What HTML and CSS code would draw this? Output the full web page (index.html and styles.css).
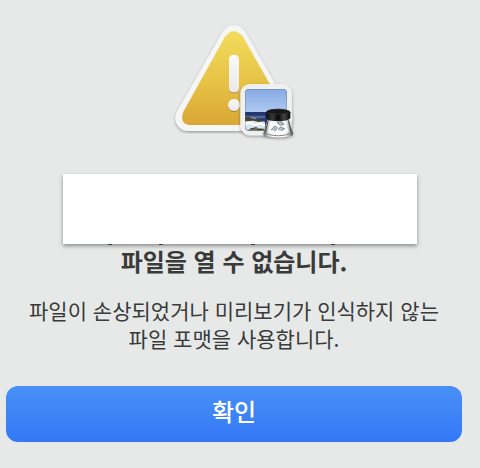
FILE: index.html
```html
<!DOCTYPE html>
<html lang="ko">
<head>
<meta charset="utf-8">
<title>미리보기</title>
<link rel="stylesheet" href="styles.css">
</head>
<body>
<main class="dialog">
  <svg class="icon" viewBox="-3 0 420 405" aria-hidden="true">
    <defs>
      <linearGradient id="gold" x1="0" y1="0" x2="0" y2="1"><stop offset="0" stop-color="#f3dc5c"/><stop offset=".5" stop-color="#e7c548"/><stop offset="1" stop-color="#daa735"/></linearGradient>
      <linearGradient id="edge" x1="0" y1="0" x2="0" y2="1"><stop offset="0" stop-color="#fafafa"/><stop offset="1" stop-color="#e9e9e9"/></linearGradient>
      <linearGradient id="sky" x1="0" y1="0" x2="0" y2="1"><stop offset="0" stop-color="#86aae4"/><stop offset="1" stop-color="#b0cbf1"/></linearGradient>
      <linearGradient id="lid" x1="0" y1="0" x2="1" y2="0"><stop offset="0" stop-color="#111"/><stop offset=".28" stop-color="#383838"/><stop offset=".5" stop-color="#080808"/><stop offset=".75" stop-color="#444"/><stop offset="1" stop-color="#050505"/></linearGradient>
      <linearGradient id="glass" x1="0" y1="0" x2="1" y2="0"><stop offset="0" stop-color="#555"/><stop offset=".16" stop-color="#d8d8d8"/><stop offset=".3" stop-color="#fff"/><stop offset=".75" stop-color="#f4f7f9"/><stop offset=".88" stop-color="#aaa"/><stop offset="1" stop-color="#444"/></linearGradient>
      <filter id="shadow" x="-20%" y="-20%" width="140%" height="140%"><feDropShadow dx="0" dy="4" stdDeviation="4" flood-color="#000" flood-opacity=".35"/></filter>
      <filter id="relief" x="-50%" y="-20%" width="200%" height="150%"><feDropShadow dx="0" dy="3" stdDeviation="2" flood-color="#7b5a10" flood-opacity=".6"/></filter>
      <clipPath id="photo"><rect x="240" y="222" width="126" height="125" rx="12"/></clipPath>
    </defs>
    <path d="M207 70 L344 309 L70 309 Z" fill="#f6f6f6" stroke="#f6f6f6" stroke-width="78" stroke-linejoin="round" filter="url(#shadow)"/>
    <path d="M181 64 Q207 33 233 64 L360 287 Q374 328 341 330 H73 Q43 325 55 290 Z" fill="url(#gold)"/>
    <g filter="url(#relief)">
      <path d="M192 134 Q192 119 207 119 Q222 119 222 134 V218 Q222 232 207 232 Q192 232 192 218 Z" fill="url(#edge)"/>
      <circle cx="207" cy="270" r="18" fill="url(#edge)"/>
    </g>
    <rect x="226" y="207" width="155" height="154" rx="29" fill="#f0f0ef" filter="url(#shadow)"/>
    <g clip-path="url(#photo)">
      <rect x="240" y="222" width="126" height="72" fill="url(#sky)"/>
      <path d="M240 291H366V347H240Z" fill="#25366f"/>
      <path d="M240 302H300V310H240Z" fill="#506997"/>
      <path d="M240 309 L254 306 L276 312 L300 320 V347 H240Z" fill="#d8e7ed"/>
      <path d="M240 307 L252 305 L269 312 L280 311 L300 319 L281 321 L265 317 L240 319Z" fill="#45413f"/>
      <path d="M240 326 L255 323 L269 330 L287 326 L301 332" fill="none" stroke="#fff" stroke-width="6"/>
      <path d="M246 347 L257 340 L266 342 L272 334 L280 340 L298 341 L301 347Z" fill="#786e54"/>
      <path d="M258 341 L270 339 M277 345 L292 343" stroke="#2f3428" stroke-width="3"/>
      <rect x="240" y="222" width="126" height="125" rx="12" fill="none" stroke="#53688c" stroke-width="3" opacity=".6"/>
    </g>
    <g filter="url(#shadow)">
      <path d="M309 310 H369 L384 354 Q386 362 376 363 Q340 371 304 363 Q293 361 296 353 Z" fill="url(#glass)"/>
    </g>
    <path d="M310 316 L301 353 M370 316 L379 353" stroke="#444" stroke-width="3"/>
    <path d="M318 318 L309 351 Q340 360 371 351 L361 318Z" fill="#f7fafb"/>
    <path d="M336 323 L350 320 L357 328 L346 331 Z M318 345 L329 333 L337 338 L330 348 M339 345 L346 336 L359 341 L349 347" fill="#b3c0c6" stroke="#5a686f" stroke-width="2"/>
    <path d="M302 356 Q340 369 379 355" fill="none" stroke="#888" stroke-width="3"/>
    <path d="M303 292 Q306 281 339 281 Q373 281 376 292 V309 Q370 319 339 319 Q307 319 303 309Z" fill="url(#lid)"/>
    <ellipse cx="339" cy="290" rx="33" ry="7" fill="#171717" stroke="#383838" stroke-width="2"/>
  </svg>
  <div class="cover">
    <svg class="marks" viewBox="0 0 354 2" aria-hidden="true"><path d="M45 0h4v1h-4zM96 0h4v1h-4zM188 0h4v1h-4zM268 0h4v1h-4z" fill="#444"/></svg>
  </div>
  <h1 class="title">파일을 열 수 없습니다.</h1>
  <p class="message">파일이 손상되었거나 미리보기가 인식하지 않는<br>파일 포맷을 사용합니다.</p>
  <button class="confirm" type="button">확인</button>
</main>
</body>
</html>
```
FILE: styles.css
```css
* {
  box-sizing: border-box;
}

body {
  margin: 0;
  background: #e7e9e8;
  color: #393b3a;
  font-family: "Noto Sans CJK KR", sans-serif;
}

.dialog {
  display: flex;
  flex-direction: column;
  align-items: center;
  padding: 15px 18px 26px 6px;
  text-align: center;
}

.icon {
  width: 140px;
  height: 135px;
}

.cover {
  display: flex;
  align-items: flex-end;
  align-self: stretch;
  height: 70px;
  margin: 24px 45px 0 57px;
  background: #fff;
  box-shadow: 0 2px 4px rgba(0, 0, 0, 0.4);
}

.marks {
  position: relative;
  top: 2px;
  width: 100%;
  height: 2px;
}

.title {
  margin: 0;
  font-size: 24px;
  font-weight: 700;
  line-height: 34px;
}

.message {
  margin: 18px 0 0;
  font-size: 21px;
  line-height: 28px;
}

.confirm {
  align-self: stretch;
  height: 56px;
  margin-top: 34px;
  padding: 0 0 8px;
  border: 0;
  border-radius: 12px;
  background: linear-gradient(#4890f7, #3478f6);
  color: #fff;
  font-family: inherit;
  font-size: 24px;
  font-weight: 500;
}
```
